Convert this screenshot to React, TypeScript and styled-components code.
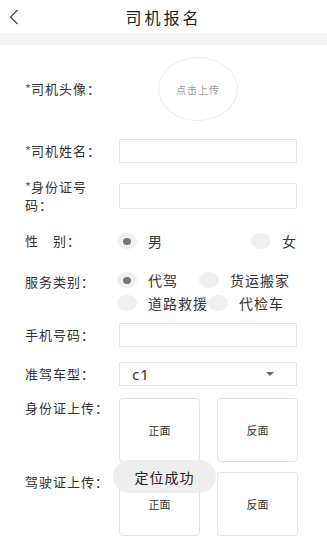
import React from 'react'
import styled, { createGlobalStyle } from 'styled-components'

const GlobalStyle = createGlobalStyle`
  html, body {
    margin: 0;
    padding: 0;
    background: #fff;
  }
  body {
    font-family: "Noto Sans CJK SC", "Noto Sans", sans-serif;
    color: #333;
  }
`

const Page = styled.div`
  position: relative;
  width: 327px;
  min-height: 549px;
  background: #fff;
`

const Header = styled.div`
  display: grid;
  grid-template-columns: 1fr auto 1fr;
  align-items: center;
  height: 33px;
`

const BackIcon = styled.svg`
  margin-left: 8px;
  width: 12px;
  height: 16px;
`

const Title = styled.h1`
  margin: 0;
  font-size: 16px;
  font-weight: 400;
  letter-spacing: 3px;
  color: #222;
`

const Band = styled.div`
  height: 12px;
  background: #f4f4f4;
`

const Form = styled.div`
  display: flex;
  flex-direction: column;
  padding: 12px 30px 0 25px;
`

const Row = styled.div<{ $top?: number; $align?: string }>`
  display: grid;
  grid-template-columns: 94px 1fr;
  align-items: ${({ $align }) => $align || 'center'};
  margin-top: ${({ $top }) => $top ?? 0}px;
`

const Label = styled.div`
  font-size: 13px;
  line-height: 18px;
  letter-spacing: 1px;
  white-space: nowrap;
  color: #333;
`

const Star = styled.span`
  color: #666;
  letter-spacing: 0;
`

const Avatar = styled.div`
  justify-self: start;
  margin-left: 39px;
  width: 80px;
  height: 64px;
  border-radius: 50%;
  border: 1px solid #ececec;
  box-sizing: border-box;
  display: flex;
  align-items: center;
  justify-content: center;
  font-size: 10px;
  letter-spacing: 1px;
  color: #999;
`

const Input = styled.div<{ $h?: number }>`
  height: ${({ $h }) => $h ?? 24}px;
  border: 1px solid #e6e6e6;
  box-sizing: border-box;
`

const Select = styled.div`
  height: 24px;
  border: 1px solid #e6e6e6;
  box-sizing: border-box;
  display: flex;
  align-items: center;
  justify-content: space-between;
  padding: 0 22px 0 12px;
  font-family: "Noto Sans", sans-serif;
  font-size: 15px;
  letter-spacing: 1px;
  color: #333;
`

const Caret = styled.span`
  width: 0;
  height: 0;
  border-left: 4px solid transparent;
  border-right: 4px solid transparent;
  border-top: 4px solid #666;
`

const Options = styled.div<{ $spread?: boolean }>`
  display: flex;
  flex-wrap: wrap;
  justify-content: ${({ $spread }) => ($spread ? 'space-between' : 'flex-start')};
  row-gap: 7px;
  margin-left: -2px;
`

const Option = styled.div<{ $gap?: number }>`
  display: flex;
  align-items: center;
  gap: 11px;
  margin-right: ${({ $gap }) => $gap ?? 0}px;
  font-size: 14px;
  letter-spacing: 1px;
  color: #333;
  line-height: 16px;
`

const Radio = styled.span<{ $on?: boolean }>`
  width: 20px;
  height: 16px;
  border-radius: 50%;
  background: #f0f0f0;
  display: flex;
  align-items: center;
  justify-content: center;

  &::after {
    content: '';
    width: 8px;
    height: 7px;
    border-radius: 50%;
    background: ${({ $on }) => ($on ? '#777' : 'transparent')};
  }
`

const Uploads = styled.div`
  display: flex;
  gap: 17px;
`

const UploadBox = styled.div`
  width: 81px;
  height: 64px;
  border: 1px solid #e2e2e2;
  border-radius: 4px;
  box-sizing: border-box;
  display: flex;
  align-items: center;
  justify-content: center;
  font-size: 11px;
  color: #333;
`

const TopLabel = styled(Label)`
  padding-top: 1px;
`

const Toast = styled.div`
  position: absolute;
  left: 113px;
  top: 460px;
  width: 103px;
  height: 33px;
  border-radius: 17px;
  background: rgba(238, 238, 238, 0.96);
  display: flex;
  align-items: center;
  justify-content: center;
  font-size: 14px;
  letter-spacing: 1px;
  color: #222;
`

export default function App() {
  return (
    <Page>
      <GlobalStyle />
      <Header>
        <BackIcon viewBox="0 0 12 16">
          <path d="M9.5 1 L2.5 8 L9.5 15" fill="none" stroke="#444" strokeWidth="1.2" />
        </BackIcon>
        <Title>司机报名</Title>
        <span />
      </Header>
      <Band />
      <Form>
        <Row>
          <Label><Star>*</Star>司机头像：</Label>
          <Avatar>点击上传</Avatar>
        </Row>
        <Row $top={18}>
          <Label><Star>*</Star>司机姓名：</Label>
          <Input />
        </Row>
        <Row $top={15}>
          <Label><Star>*</Star>身份证号<br />码：</Label>
          <Input $h={26} />
        </Row>
        <Row $top={18}>
          <Label>性&#12288;别：</Label>
          <Options $spread>
            <Option><Radio $on />男</Option>
            <Option><Radio />女</Option>
          </Options>
        </Row>
        <Row $top={22} $align="start">
          <TopLabel>服务类别：</TopLabel>
          <Options>
            <Option $gap={21}><Radio $on />代驾</Option>
            <Option><Radio />货运搬家</Option>
            <Option $gap={0}><Radio />道路救援</Option>
            <Option><Radio />代检车</Option>
          </Options>
        </Row>
        <Row $top={12}>
          <Label>手机号码：</Label>
          <Input />
        </Row>
        <Row $top={15}>
          <Label>准驾车型：</Label>
          <Select>c1<Caret /></Select>
        </Row>
        <Row $top={12} $align="start">
          <TopLabel>身份证上传：</TopLabel>
          <Uploads>
            <UploadBox>正面</UploadBox>
            <UploadBox>反面</UploadBox>
          </Uploads>
        </Row>
        <Row $top={10} $align="start">
          <TopLabel>驾驶证上传：</TopLabel>
          <Uploads>
            <UploadBox>正面</UploadBox>
            <UploadBox>反面</UploadBox>
          </Uploads>
        </Row>
      </Form>
      <Toast>定位成功</Toast>
    </Page>
  )
}
